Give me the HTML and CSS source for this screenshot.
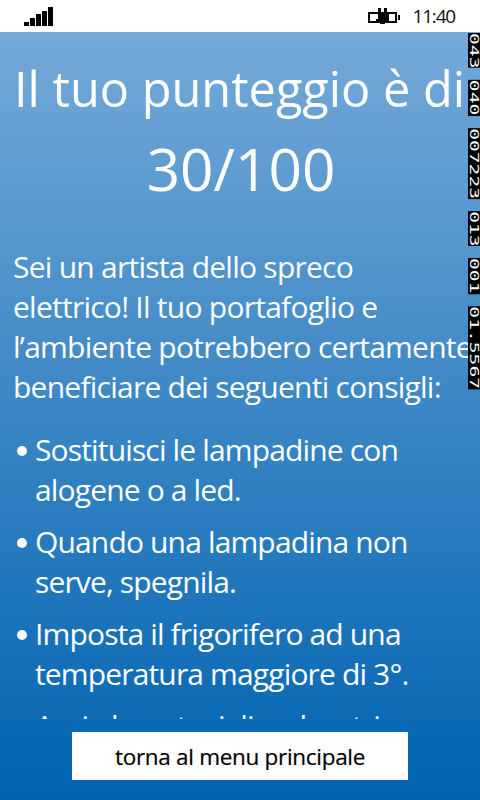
FILE: index.html
```html
<!DOCTYPE html>
<html lang="it">
<head>
<meta charset="utf-8">
<title>Punteggio</title>
<link rel="stylesheet" href="styles.css">
</head>
<body>
<div class="phone">
  <header class="status">
    <div class="signal"><i class="b1"></i><i class="b2"></i><i class="b3"></i><i class="b4"></i><i class="b5"></i></div>
    <div class="status-right">
      <svg class="battery" width="32" height="16" viewBox="0 0 32 16" aria-hidden="true">
        <path fill="#000" fill-rule="evenodd" d="M0 4h10V0h3v4h3V0h3v4h10v11H17v1h-5v-1H0zM2 6v7h6v-2h2V6zM21 6v7h6V6z"/>
        <rect x="30" y="7" width="2" height="5" fill="#000"/>
      </svg>
      <span class="time">11:40</span>
    </div>
  </header>
  <main class="screen">
    <div class="scroll">
      <h1 class="title">Il tuo punteggio è di<span class="score">30/100</span></h1>
      <p class="intro">Sei un artista dello spreco<br>elettrico! Il tuo portafoglio e<br>l’ambiente potrebbero certamente<br>beneficiare dei seguenti consigli:</p>
      <ul class="tips">
        <li>Sostituisci le lampadine con<br>alogene o a led.</li>
        <li>Quando una lampadina non<br>serve, spegnila.</li>
        <li>Imposta il frigorifero ad una<br>temperatura maggiore di 3°.</li>
        <li>Avvia lavastoviglie e lavatrice</li>
      </ul>
    </div>
    <div class="footer"><button class="back" type="button">torna al menu principale</button></div>
  </main>
  <div class="counters">
    <span>043</span><span>040</span><span>007223</span><span>013</span><span>001</span><span>01.5567</span>
  </div>
</div>
</body>
</html>
```
FILE: styles.css
```css
* { box-sizing: border-box; }
html, body { margin: 0; height: 100%; }
body { font-family: "Open Sans", "Noto Sans", sans-serif; background: #fff; }
.phone { position: relative; width: 480px; height: 800px; overflow: hidden; display: flex; flex-direction: column; }
.status { height: 32px; background: #fff; display: flex; justify-content: space-between; align-items: flex-start; padding: 0 25px 0 24px; }
.signal { display: flex; align-items: flex-end; gap: 1px; height: 26px; }
.signal i { display: block; width: 5px; background: #000; }
.b1 { height: 4px; } .b2 { height: 8px; } .b3 { height: 12px; } .b4 { height: 15px; } .b5 { height: 19px; }
.status-right { display: flex; align-items: center; gap: 13px; height: 32px; }
.battery { display: block; margin-bottom: 1px; }
.time { font-size: 19px; letter-spacing: -1.2px; color: #111; }
.screen { flex: 1; min-height: 0; display: flex; flex-direction: column; color: #fff; background: linear-gradient(180deg, #74a9d8 0%, #0063b1 100%); }
.scroll { flex: 1; min-height: 0; overflow: hidden; padding: 21px 0 0 13px; white-space: nowrap; }
.title { margin: 0; padding: 0 18px 0 1px; font-size: 48.700px; line-height: 71px; font-weight: 400; text-align: center; }
.score { display: block; margin-top: 9px; padding-left: 6px; font-size: 58.500px; }
.intro { margin: 43px 0 0; font-size: 30px; line-height: 40px; letter-spacing: -0.75px; }
.tips { list-style: none; margin: 23px 0 0; padding: 0; }
.tips li { position: relative; padding-left: 22px; margin-bottom: 12px; font-size: 30px; line-height: 40px; letter-spacing: -0.85px; }
.tips li::before { content: ""; position: absolute; left: 4px; top: 16px; width: 10px; height: 10px; border-radius: 50%; background: #fff; }
.footer { flex: none; height: 81px; padding: 13px 72px 20px; }
.back { display: block; width: 100%; height: 48px; border: 0; background: #fff; color: #000; font: 400 22.500px "Open Sans", "Noto Sans", sans-serif; letter-spacing: -0.3px; -webkit-text-stroke: 0.2px #000; }
.counters { position: absolute; top: 33px; right: 0; display: flex; flex-direction: column; gap: 8px; transform: scaleY(1.51); transform-origin: top; }
.counters span { display: block; width: 12px; background: #000; color: #fff; font: 400 13px/12px "DejaVu Sans Mono", monospace; writing-mode: vertical-rl; }
```
